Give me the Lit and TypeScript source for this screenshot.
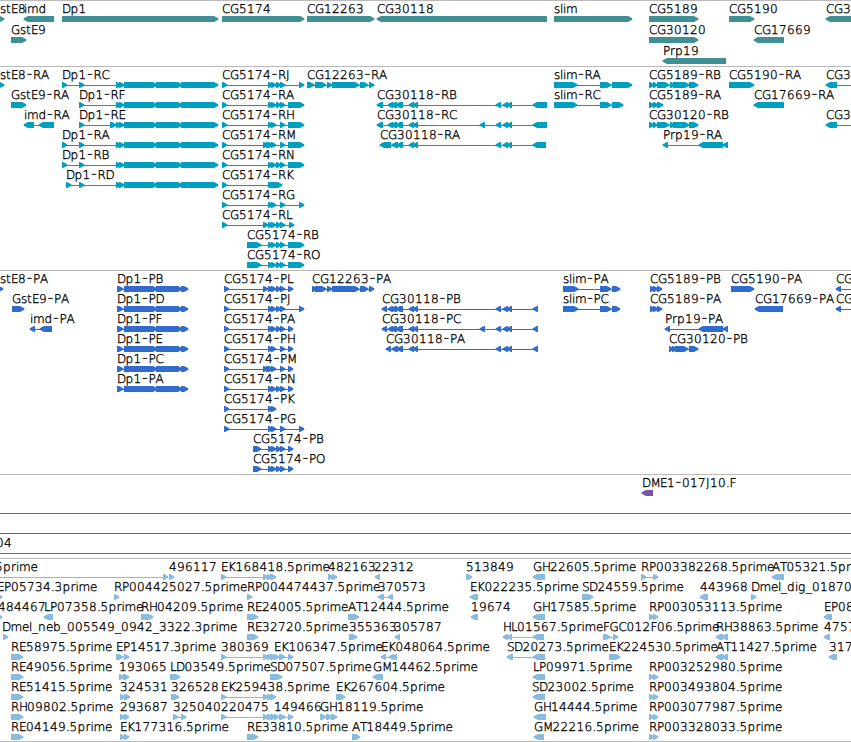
import { LitElement, html, svg, css } from "lit";
import { customElement, property } from "lit/decorators.js";

type Span = [number, number];

interface IFeature {
  row: number;
  name: string;
  strand: 1 | -1;
  exons: Span[];
  labelX?: number;
}

interface ITrack {
  kind: string;
  height: number;
  pitch: number;
  features: IFeature[];
  rules?: number[];
}

const BAR_TOP = 15;
const BAR_HEIGHT = 6;
const BASELINE = 12;
const HEAD = 5;

// advances for the 12px label font, digits and anything not listed take 8
const ADVANCE: Record<string, number> = {
  A: 8, B: 8, C: 8, D: 8.5, E: 7, F: 6.5, G: 9, H: 8, J: 4, K: 7.5, L: 6, M: 9.5,
  N: 9, O: 9, P: 7, R: 8, S: 7, T: 6.5, "-": 7, ".": 3.5, _: 6,
  e: 7, g: 8, i: 3, l: 3, m: 11.5, r: 5, s: 6, t: 5,
};

const fwd = (row: number, name: string, ...exons: Span[]): IFeature => ({ row, name, strand: 1, exons });
const rev = (row: number, name: string, ...exons: Span[]): IFeature => ({ row, name, strand: -1, exons });
const at = (labelX: number, feature: IFeature): IFeature => ({ ...feature, labelX });

const genes: IFeature[] = [
  at(0, fwd(0, "stE8", [-10, 4])),
  rev(0, "imd", [24, 54]),
  fwd(0, "Dp1", [62, 218]),
  fwd(0, "CG5174", [222, 304]),
  fwd(0, "CG12263", [307, 374]),
  rev(0, "CG30118", [377, 547]),
  fwd(0, "slim", [554, 632]),
  fwd(0, "CG5189", [649, 698]),
  fwd(0, "CG5190", [729, 754]),
  rev(0, "CG3", [826, 860]),
  fwd(1, "GstE9", [11, 26]),
  fwd(1, "CG30120", [649, 698]),
  rev(1, "CG17669", [754, 784]),
  rev(2, "Prp19", [663, 726]),
];

const dp1Tail: Span[] = [[116, 121], [119, 124], [124, 157], [156, 182], [181, 218]];
const A: Span = [268, 273];
const B: Span = [271, 276];
const C: Span = [276, 281];
const D: Span = [280, 285];
const pre: Span[] = [[263, 268], [266, 271]];
const utr: Span = [288, 304];
const mid: Span = [288, 293];
const far: Span = [299, 304];

const cgLeft: Span[] = [[388, 393], [391, 397], [396, 403]];
const cgPair: Span[] = [[409, 414], [413, 418]];
const cgTail: Span[] = [[496, 501], [503, 508], [507, 512]];
const cg5189: Span[] = [[649, 654], [653, 657], [657, 669], [670, 675], [673, 689], [689, 698]];

const transcripts: IFeature[] = [
  at(0, fwd(0, "stE8-RA", [-10, 4])),
  fwd(1, "GstE9-RA", [11, 26]),
  rev(2, "imd-RA", [24, 34], [39, 54]),
  fwd(0, "Dp1-RC", [62, 67], [79, 84], ...dp1Tail),
  fwd(1, "Dp1-RF", [79, 84], ...dp1Tail),
  fwd(2, "Dp1-RE", [79, 84], [110, 116], ...dp1Tail),
  fwd(3, "Dp1-RA", [62, 67], [79, 84], ...dp1Tail),
  fwd(4, "Dp1-RB", [62, 67], [79, 84], ...dp1Tail),
  fwd(5, "Dp1-RD", [66, 71], [79, 84], ...dp1Tail),
  fwd(0, "CG5174-RJ", [222, 227], A, B, C, D, far),
  fwd(1, "CG5174-RA", [222, 227], A, B, C, D, utr),
  fwd(2, "CG5174-RH", [222, 227], A, B, D, utr),
  fwd(3, "CG5174-RM", [222, 227], ...pre, A, B, D, utr),
  fwd(4, "CG5174-RN", [222, 227], A, B, C, D, utr),
  fwd(5, "CG5174-RK", [222, 227], A, [270, 282]),
  fwd(6, "CG5174-RG", [222, 227], A, B, D, far),
  fwd(7, "CG5174-RL", [222, 227], [263, 268], A, B, C, D, [289, 294]),
  fwd(8, "CG5174-RB", [247, 261], A, B, C, D, utr),
  fwd(9, "CG5174-RO", [247, 261], A, B, C, D, utr),
  fwd(0, "CG12263-RA", [307, 314], [315, 326], [327, 332], [332, 359], [360, 368], [369, 374]),
  rev(1, "CG30118-RB", [377, 383], ...cgLeft, ...cgPair, ...cgTail, [533, 547]),
  rev(2, "CG30118-RC", [377, 383], ...cgLeft, ...cgPair, [480, 485], ...cgTail, [533, 547]),
  rev(3, "CG30118-RA", [380, 391], [392, 398], [397, 403], ...cgPair, ...cgTail, [533, 546]),
  fwd(0, "slim-RA", [554, 577], [600, 611], [612, 632]),
  fwd(1, "slim-RC", [554, 577], [600, 611], [612, 623]),
  fwd(0, "CG5189-RB", ...cg5189),
  fwd(1, "CG5189-RA", [649, 654], [653, 658], [657, 663]),
  fwd(2, "CG30120-RB", ...cg5189),
  rev(3, "Prp19-RA", [663, 668], [699, 723], [723, 728]),
  fwd(0, "CG5190-RA", [729, 754]),
  rev(1, "CG17669-RA", [754, 784]),
  rev(0, "CG3", [826, 837], [860, 870]),
  rev(2, "CG3", [826, 837], [860, 870]),
];

const dp1Cds: Span[] = [[117, 123], [124, 157], [156, 182], [181, 188]];
const slimCds: Span[] = [[563, 578], [600, 611], [612, 620]];
const cg5189Cds: Span[] = [[650, 655], [653, 658], [657, 662]];

const proteins: IFeature[] = [
  at(0, fwd(0, "stE8-PA", [-10, 3])),
  fwd(1, "GstE9-PA", [12, 24]),
  rev(2, "imd-PA", [30, 35], [40, 52]),
  ...["PB", "PD", "PF", "PE", "PC", "PA"].map((id, row) => fwd(row, `Dp1-${id}`, ...dp1Cds)),
  fwd(0, "CG5174-PL", [224, 229], [263, 268], A, B, C, D, mid),
  fwd(1, "CG5174-PJ", [224, 229], A, B, C, D, far),
  fwd(2, "CG5174-PA", [224, 229], A, B, C, D, mid),
  fwd(3, "CG5174-PH", [224, 229], A, B, D, mid),
  fwd(4, "CG5174-PM", [224, 229], ...pre, A, B, D, mid),
  fwd(5, "CG5174-PN", [224, 229], A, B, C, D, mid),
  fwd(6, "CG5174-PK", [224, 229], A, B),
  fwd(7, "CG5174-PG", [224, 229], A, B, D, far),
  fwd(8, "CG5174-PB", [253, 261], A, B, C, D, mid),
  fwd(9, "CG5174-PO", [253, 261], A, B, C, D, mid),
  fwd(0, "CG12263-PA", [312, 317], [315, 326], [327, 332], [332, 359], [360, 368], [369, 374]),
  rev(1, "CG30118-PB", [382, 387], ...cgLeft, ...cgPair, ...cgTail, [533, 538]),
  rev(2, "CG30118-PC", [382, 387], ...cgLeft, ...cgPair, [480, 485], ...cgTail, [533, 538]),
  rev(3, "CG30118-PA", [386, 391], [392, 398], [397, 403], ...cgPair, ...cgTail, [533, 538]),
  fwd(0, "slim-PA", ...slimCds),
  fwd(1, "slim-PC", ...slimCds),
  fwd(0, "CG5189-PB", ...cg5189Cds),
  fwd(1, "CG5189-PA", ...cg5189Cds),
  rev(2, "Prp19-PA", [665, 670], [699, 723], [723, 728]),
  fwd(3, "CG30120-PB", [669, 673], [672, 677], [675, 688], [689, 698]),
  fwd(0, "CG5190-PA", [731, 754]),
  rev(1, "CG17669-PA", [755, 783]),
  rev(0, "CG", [836, 841], [860, 870]),
  rev(1, "CG", [836, 841], [860, 870]),
];

const bacs: IFeature[] = [
  rev(0, "DME1-017J10.F", [642, 653]),
  at(-4, fwd(3, "04")),
];

const ekHead: Span[] = [[221, 226], [263, 268], [267, 272], [270, 276]];
const gh: Span = [533, 545];
const rp: Span[] = [[649, 654], [653, 658]];

const ests: IFeature[] = [
  at(-5, fwd(0, "5prime", [-10, -5], [163, 168])),
  fwd(0, "496117", [169, 174]),
  fwd(0, "EK168418.5prime", ...ekHead),
  fwd(0, "482163", [328, 333], [332, 337]),
  at(374, rev(0, "22312", [375, 380])),
  fwd(0, "513849", [466, 472]),
  rev(0, "GH22605.5prime", gh),
  fwd(0, "RP003382268.5prime", [641, 646], [653, 658]),
  rev(0, "AT05321.5prime", [772, 784]),

  at(-3, fwd(1, "EP05734.3prime", [-4, 2])),
  fwd(1, "RP004425027.5prime", [114, 119]),
  fwd(1, "RP004474437.5prime", [247, 252]),
  rev(1, "370573", [378, 384], [388, 393]),
  rev(1, "EK022235.5prime", [470, 478]),
  fwd(1, "SD24559.5prime", [582, 593]),
  rev(1, "443968", [700, 708]),
  fwd(1, "Dmel_dig_01870", [751, 756]),

  at(-2, fwd(2, "484467", [-4, 2])),
  rev(2, "LP07358.5prime", [44, 53]),
  fwd(2, "RH04209.5prime", [141, 153]),
  fwd(2, "RE24005.5prime", [247, 258]),
  fwd(2, "AT12444.5prime", [348, 359]),
  rev(2, "19674", [471, 478]),
  rev(2, "GH17585.5prime", gh),
  fwd(2, "RP003053113.5prime", ...rp),
  rev(2, "EP08", [824, 832]),

  at(2, fwd(3, "Dmel_neb_005549_0942_3322.3prime", [3, 8])),
  fwd(3, "RE32720.5prime", [247, 258]),
  fwd(3, "355363", [349, 357]),
  at(394, rev(3, "305787", [395, 400])),
  rev(3, "HL01567.5prime", [503, 508], [507, 512], [533, 544]),
  fwd(3, "FGC012F06.5prime", [603, 610], [613, 618]),
  rev(3, "RH38863.5prime", [716, 723], [722, 728]),
  rev(3, "4757", [824, 830]),

  fwd(4, "RE58975.5prime", [11, 23]),
  fwd(4, "EP14517.3prime", [116, 123], [124, 129]),
  fwd(4, "380369", ...ekHead),
  fwd(4, "EK106347.5prime", [274, 279], [279, 285], [288, 293]),
  rev(4, "EK048064.5prime", [381, 386], [389, 394], [392, 397]),
  rev(4, "SD20273.5prime", [507, 513], gh),
  fwd(4, "EK224530.5prime", [609, 614], [611, 620]),
  rev(4, "AT11427.5prime", [716, 723], [722, 728]),
  rev(4, "317", [829, 837]),

  fwd(5, "RE49056.5prime", [11, 23]),
  fwd(5, "193065", [119, 124], [123, 129]),
  fwd(5, "LD03549.5prime", [170, 180]),
  fwd(5, "SD07507.5prime", [270, 282]),
  rev(5, "GM14462.5prime", [373, 383]),
  rev(5, "LP09971.5prime", gh),
  fwd(5, "RP003252980.5prime", ...rp),

  fwd(6, "RE51415.5prime", [11, 23]),
  fwd(6, "324531", [120, 125], [124, 130]),
  fwd(6, "326528", [171, 179]),
  fwd(6, "EK259438.5prime", ...ekHead),
  fwd(6, "EK267604.5prime", [336, 345]),
  at(532, rev(6, "SD23002.5prime", gh)),
  fwd(6, "RP003493804.5prime", ...rp),

  fwd(7, "RH09802.5prime", [11, 23]),
  fwd(7, "293687", [120, 125], [124, 129]),
  fwd(7, "325040", [173, 178], [181, 186]),
  fwd(7, "220475", ...ekHead),
  fwd(7, "149466", [274, 279], [279, 285], [288, 293]),
  fwd(7, "GH18119.5prime", [320, 326], [326, 332], [331, 337]),
  rev(7, "GH14444.5prime", [534, 546]),
  fwd(7, "RP003077987.5prime", ...rp),

  fwd(8, "RE04149.5prime", [11, 23]),
  fwd(8, "EK177316.5prime", [120, 125], [124, 129]),
  fwd(8, "RE33810.5prime", [247, 258]),
  fwd(8, "AT18449.5prime", [352, 360]),
  rev(8, "GM22216.5prime", [534, 544]),
  fwd(8, "RP003328033.5prime", ...rp),
];

const tracks: ITrack[] = [
  { kind: "gene", height: 65, pitch: 21, features: genes },
  { kind: "transcript", height: 203, pitch: 20, features: transcripts },
  { kind: "protein", height: 203, pitch: 20, features: proteins },
  { kind: "bac", height: 83, pitch: 20, features: bacs, rules: [1, 2, 3] },
  { kind: "est", height: 182, pitch: 20, features: ests },
];

@customElement("feature-track")
export class FeatureTrack extends LitElement {
  static styles = css`
    :host {
      display: block;
      border-top: 1px solid #bababa;
    }
    svg {
      display: block;
      width: 100%;
    }
    .gene {
      fill: #3f8f94;
    }
    .transcript {
      fill: #009fc0;
    }
    .protein {
      fill: #316ccd;
    }
    .bac {
      fill: #7557a6;
    }
    .est {
      fill: #88bbdd;
    }
    .label {
      fill: #000000;
      stroke: #000000;
      stroke-width: 0.35px;
      font-family: "DejaVu Sans", sans-serif;
      font-size: 12px;
      font-weight: 200;
      font-kerning: none;
      text-rendering: geometricPrecision;
    }
    .dash {
      stroke: none;
      font-family: Inter, sans-serif;
      font-size: 15px;
      font-weight: 300;
    }
  `;

  @property({ attribute: false })
  track: ITrack;

  exon([start, end]: Span, strand: number, top: number) {
    const head = Math.min(HEAD, end - start) - 1;
    const tip = strand > 0 ? end + 0.3 : start - 0.3;
    const neck = strand > 0 ? end - head : start + head;
    const tail = strand > 0 ? start : end;
    const bottom = top + BAR_HEIGHT;
    const middle = top + BAR_HEIGHT / 2;
    const points = [
      [tail, top], [neck, top], [tip, middle - 0.7],
      [tip, middle + 0.7], [neck, bottom], [tail, bottom],
    ];
    return svg`<polygon points=${points.join(" ")}></polygon>`;
  }

  label(name: string, x: number, y: number) {
    let pen = x;
    const xs = [...name].map((char) => {
      const left = pen;
      pen += ADVANCE[char] ?? 8;
      return left;
    });
    const parts = name.split("-");
    return svg`<text class="label" x=${xs.join(" ")} y=${y}>${parts.map((part, i) =>
      i ? svg`<tspan class="dash">-</tspan>${part}` : part)}</text>`;
  }

  feature({ row, name, strand, exons, labelX }: IFeature) {
    const top = row * this.track.pitch;
    const start = exons.length ? exons[0][0] : 0;
    const end = exons.length ? exons[exons.length - 1][1] : 0;
    return svg`
      ${exons.length > 1
        ? svg`<rect x=${start} y=${top + BAR_TOP + 3} width=${end - start} height="1"></rect>`
        : ""}
      ${exons.map((exon) => this.exon(exon, strand, top + BAR_TOP))}
      ${this.label(name, labelX ?? start, top + BASELINE)}`;
  }

  render() {
    const { kind, height, pitch, features, rules = [] } = this.track;
    return html`
      <svg class=${kind} height=${height}>
        ${rules.map((row) => svg`
          <rect x="0" y=${row * pitch + BAR_TOP + 3} width="100%" height="1"></rect>`)}
        ${features.map((feature) => this.feature(feature))}
      </svg>`;
  }
}

@customElement("app-root")
export class AppRoot extends LitElement {
  static styles = css`
    :host {
      display: flex;
      flex-direction: column;
      box-sizing: border-box;
      height: 742px;
      overflow: hidden;
      background-color: #ffffff;
      border-bottom: 1px solid #bababa;
    }
  `;

  render() {
    return html`${tracks.map((track) => html`<feature-track .track=${track}></feature-track>`)}`;
  }
}
